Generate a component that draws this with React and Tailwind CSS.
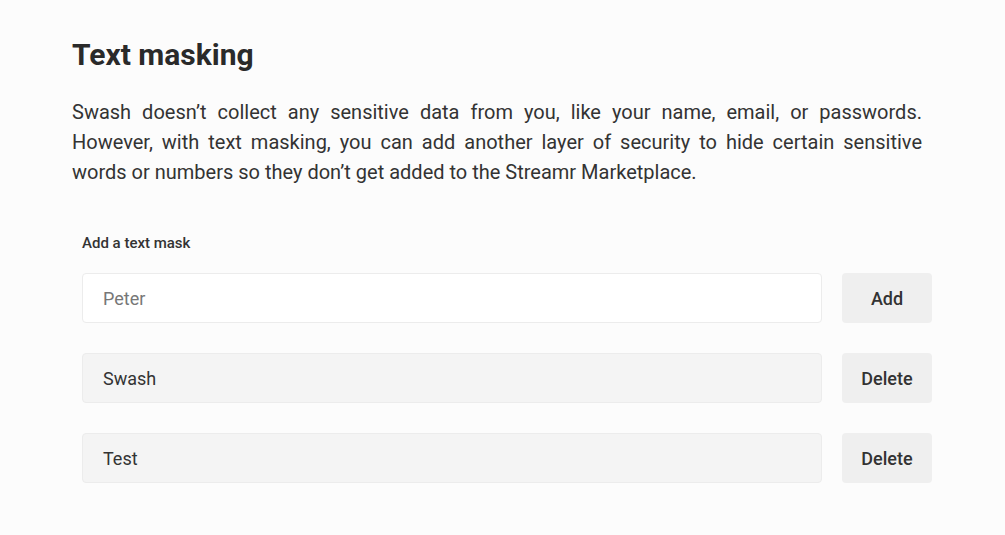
export default function App() {
  const masks = ["Swash", "Test"];
  return (
    <div className="min-h-[535px] bg-[#fcfcfc] font-['Roboto',sans-serif] text-[#2b2b2b]">
      <div className="ml-[72px] pt-[37px]">
        <h1 className="text-[30px] font-bold leading-[36px] text-[#2a2a2a]">Text masking</h1>
        <p className="w-[850px] mt-[24px] text-[20px] leading-[30px] text-justify text-[#333]">
          Swash doesn’t collect any sensitive data from you, like your name, email, or passwords. However, with text masking, you can add another layer of security to hide certain sensitive words or numbers so they don’t get added to the Streamr Marketplace.
        </p>
        <div className="ml-[10px] mt-[46px] w-[850px]">
          <div className="text-[15px] font-medium leading-[20px] text-[#333]">Add a text mask</div>
          <div className="mt-[20px] flex flex-col gap-[30px]">
            <div className="flex gap-[20px]">
              <input
                className="w-[740px] shrink-0 h-[50px] bg-white border border-[#ececec] rounded-[4px] px-[20px] text-[18px] text-[#333] placeholder:text-[#777] outline-none"
                placeholder="Peter"
              />
              <button className="w-[90px] shrink-0 h-[50px] bg-[#efefef] rounded-[4px] text-[18px] font-medium text-[#333]">Add</button>
            </div>
            {masks.map((m) => (
              <div key={m} className="flex gap-[20px]">
                <div className="w-[740px] shrink-0 h-[50px] bg-[#f4f4f4] border border-[#ececec] rounded-[4px] px-[20px] flex items-center text-[18px] text-[#333]">
                  {m}
                </div>
                <button className="w-[90px] shrink-0 h-[50px] bg-[#efefef] rounded-[4px] text-[18px] font-medium text-[#333]">Delete</button>
              </div>
            ))}
          </div>
        </div>
      </div>
    </div>
  );
}
